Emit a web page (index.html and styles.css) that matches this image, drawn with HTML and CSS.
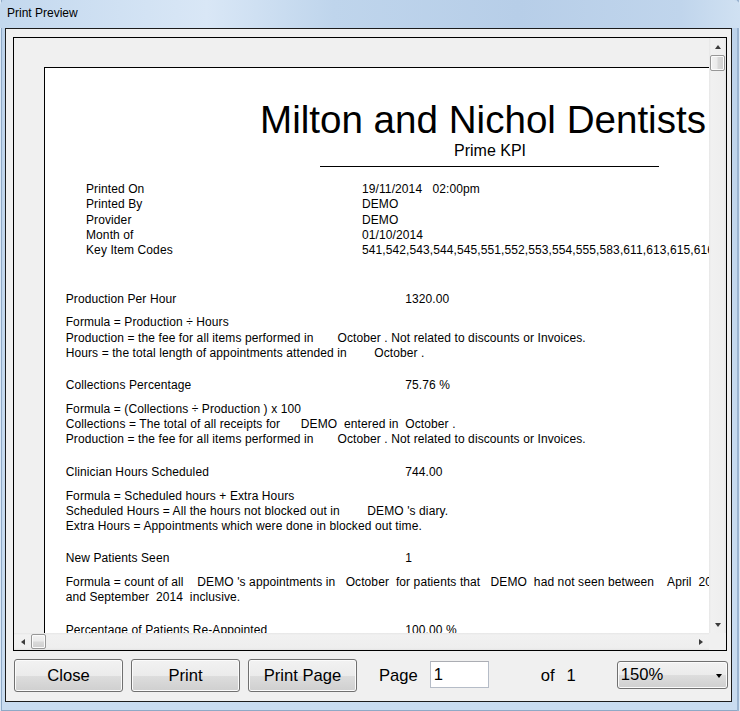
FILE: index.html
```html
<!DOCTYPE html>
<html>
<head>
<meta charset="utf-8">
<title>Print Preview</title>
<link rel="stylesheet" href="styles.css">
</head>
<body>
<div class="window">
  <div class="titlebar"><span class="title">Print Preview</span></div>
  <div class="frame">
    <div class="client">
      <div class="preview">
        <div class="viewport">
          <div class="page">
            <div class="rpt-title">Milton and Nichol Dentists</div>
            <div class="rpt-sub">Prime KPI</div>
            <div class="rpt-rule"></div>
            <div class="info">
              <span>Printed On</span><span class="val">19/11/2014   02:00pm</span>
              <span>Printed By</span><span class="val">DEMO</span>
              <span>Provider</span><span class="val">DEMO</span>
              <span>Month of</span><span class="val">01/10/2014</span>
              <span>Key Item Codes</span><span class="val">541,542,543,544,545,551,552,553,554,555,583,611,613,615,616,617,618</span>
            </div>
            <div class="sections">
              <div class="section">
                <div class="kpi"><span>Production Per Hour</span><span>1320.00</span></div>
                <div class="formula">
                  <div class="line">Formula = Production ÷ Hours</div>
                  <div class="line">Production = the fee for all items performed in       October . Not related to discounts or Invoices.</div>
                  <div class="line">Hours = the total length of appointments attended in        October .</div>
                </div>
              </div>
              <div class="section">
                <div class="kpi"><span>Collections Percentage</span><span>75.76 %</span></div>
                <div class="formula">
                  <div class="line">Formula = (Collections ÷ Production ) x 100</div>
                  <div class="line">Collections = The total of all receipts for      DEMO  entered in  October .</div>
                  <div class="line">Production = the fee for all items performed in       October . Not related to discounts or Invoices.</div>
                </div>
              </div>
              <div class="section">
                <div class="kpi"><span>Clinician Hours Scheduled</span><span>744.00</span></div>
                <div class="formula">
                  <div class="line">Formula = Scheduled hours + Extra Hours</div>
                  <div class="line">Scheduled Hours = All the hours not blocked out in        DEMO 's diary.</div>
                  <div class="line">Extra Hours = Appointments which were done in blocked out time.</div>
                </div>
              </div>
              <div class="section">
                <div class="kpi"><span>New Patients Seen</span><span>1</span></div>
                <div class="formula">
                  <div class="line">Formula = count of all    DEMO 's appointments in   October  for patients that   DEMO  had not seen between    April  2014</div>
                  <div class="line">and September  2014  inclusive.</div>
                </div>
              </div>
              <div class="section">
                <div class="kpi"><span>Percentage of Patients Re-Appointed</span><span>100.00 %</span></div>
                <div class="formula">
                  <div class="line">Formula = count of patients re-appointed</div>
                </div>
              </div>
            </div>
          </div>
        </div>
        <div class="vscroll">
          <div class="sb-btn"><span class="arr arr-up"></span></div>
          <div class="thumb thumb-v"></div>
          <div class="sb-fill"></div>
          <div class="sb-btn"><span class="arr arr-down"></span></div>
        </div>
        <div class="hscroll">
          <div class="sb-btn"><span class="arr arr-left"></span></div>
          <div class="thumb thumb-h"></div>
          <div class="sb-fill"></div>
          <div class="sb-btn"><span class="arr arr-right"></span></div>
        </div>
        <div class="corner"></div>
      </div>
      <div class="toolbar">
        <div class="btn">Close</div>
        <div class="btn">Print</div>
        <div class="btn">Print Page</div>
        <span class="lbl lbl-page">Page</span>
        <div class="pagebox">1</div>
        <span class="lbl lbl-of">of</span>
        <span class="lbl lbl-count">1</span>
        <div class="combo"><span>150%</span><span class="arr arr-down combo-arr"></span></div>
      </div>
    </div>
  </div>
</div>
</body>
</html>
```

FILE: styles.css
```css
html, body {
  margin: 0;
  padding: 0;
}
body {
  width: 740px;
  height: 711px;
  overflow: hidden;
  font-family: "Liberation Sans", Arial, sans-serif;
  color: #000;
}
.window {
  width: 740px;
  height: 711px;
  display: flex;
  flex-direction: column;
  background: linear-gradient(to bottom, #bcd2ea 0%, #c6daef 60%, #c9dcf0 100%);
  box-shadow: inset 1px 0 0 #dbe8f6, inset 2px 0 0 #8fa9c6, inset -1px 0 0 #dbe8f6, inset -3px 0 0 #9bb4d0, inset 0 -1px 0 #8fa9c6;
}
.titlebar {
  height: 28px;
  flex: none;
  padding-left: 7px;
  box-sizing: border-box;
  background: linear-gradient(to right, #c3d8ee 0%, #d3e3f4 20%, #d9e7f6 28%, #bfd5ec 45%, #b7cee8 70%, #c0d5ec 92%, #d0e1f2 100%);
  border-top-right-radius: 6px;
  border-top-left-radius: 6px;
}
.title {
  display: block;
  padding-top: 6px;
  font-size: 12px;
  line-height: 15px;
  color: #000;
}
.frame {
  flex: 1;
  padding: 0 8px 9px 5px;
  min-height: 0;
}
.client {
  height: 100%;
  box-sizing: border-box;
  border: 1px solid #1c1c1c;
  background: #f0f0f0;
  padding: 8px 0 0 7px;
}
.preview {
  width: 714px;
  height: 614px;
  box-sizing: border-box;
  border: 1px solid #000;
  display: grid;
  grid-template-columns: 695px 17px;
  grid-template-rows: 595px 17px;
}
.viewport {
  overflow: hidden;
  background: #f0f0f0;
}
.page {
  margin: 29px 0 0 30px;
  width: 900px;
  height: 800px;
  background: #fff;
  border: 1px solid #000;
  font-size: 12px;
  letter-spacing: 0.1px;
}
.rpt-title {
  margin: 33.1px 0 0 215px;
  font-size: 38.6px;
  line-height: 38.6px;
  letter-spacing: 0;
  white-space: nowrap;
}
.rpt-sub {
  margin: 2.3px 0 0 409px;
  font-size: 16px;
  line-height: 18px;
  letter-spacing: 0;
  white-space: nowrap;
}
.rpt-rule {
  margin: 5.8px 0 0 275px;
  width: 339px;
  height: 1px;
  background: #000;
}
.info {
  margin: 15.5px 0 0 41px;
  display: grid;
  grid-template-columns: 276px auto;
  line-height: 15.2px;
  white-space: nowrap;
}
.val {
  white-space: pre;
}
.sections {
  margin: 33.4px 0 0 20.7px;
}
.section + .section {
  margin-top: 17.2px;
}
.kpi {
  display: grid;
  grid-template-columns: 339.5px auto;
  line-height: 15.2px;
  white-space: nowrap;
}
.formula {
  margin-top: 8.6px;
  line-height: 15.2px;
}
.line {
  white-space: pre;
}

/* scrollbars */
.vscroll {
  grid-column: 2;
  grid-row: 1;
  display: flex;
  flex-direction: column;
  background: linear-gradient(to right, #e6e6e6 0%, #f1f1f1 12%, #eeeeee 88%, #e4e4e4 100%);
}
.hscroll {
  grid-column: 1;
  grid-row: 2;
  display: flex;
  flex-direction: row;
  background: linear-gradient(to bottom, #e6e6e6 0%, #f1f1f1 12%, #eeeeee 88%, #e4e4e4 100%);
}
.corner {
  grid-column: 2;
  grid-row: 2;
  background: #f0f0f0;
}
.sb-btn {
  width: 17px;
  height: 17px;
  flex: none;
  display: flex;
  align-items: center;
  justify-content: center;
}
.sb-fill {
  flex: 1;
}
.thumb {
  flex: none;
  box-sizing: border-box;
  border: 1px solid #979797;
  border-radius: 2px;
  box-shadow: inset 0 0 0 1px #fbfbfb;
}
.thumb-v {
  width: 15px;
  height: 16px;
  margin-left: 1px;
  background: linear-gradient(to right, #f2f2f2 0%, #ebebeb 45%, #d9d9d9 55%, #cfcfcf 100%);
}
.thumb-h {
  width: 15px;
  height: 15px;
  margin-top: 1px;
  background: linear-gradient(to bottom, #f2f2f2 0%, #ebebeb 45%, #d9d9d9 55%, #cfcfcf 100%);
}
.arr {
  width: 0;
  height: 0;
  display: block;
}
.arr-up {
  border-left: 3.5px solid transparent;
  border-right: 3.5px solid transparent;
  border-bottom: 4px solid #3b3b3b;
}
.arr-down {
  border-left: 3.5px solid transparent;
  border-right: 3.5px solid transparent;
  border-top: 4px solid #3b3b3b;
}
.arr-left {
  border-top: 3.5px solid transparent;
  border-bottom: 3.5px solid transparent;
  border-right: 4px solid #3b3b3b;
}
.arr-right {
  border-top: 3.5px solid transparent;
  border-bottom: 3.5px solid transparent;
  border-left: 4px solid #3b3b3b;
}

/* toolbar */
.toolbar {
  display: flex;
  align-items: flex-start;
  margin: 8px 0 0 1px;
  font-size: 16.6px;
}
.btn {
  width: 109px;
  height: 33px;
  box-sizing: border-box;
  margin-right: 8px;
  border: 1px solid #707070;
  border-radius: 3px;
  background: linear-gradient(to bottom, #f2f2f2 0%, #ebebeb 50%, #dddddd 51%, #cfcfcf 100%);
  box-shadow: inset 0 0 0 1px #fbfbfb;
  text-align: center;
  line-height: 32px;
  white-space: nowrap;
}
.lbl {
  line-height: 33px;
  white-space: nowrap;
}
.lbl-page {
  margin-left: 14px;
}
.pagebox {
  margin: 2px 0 0 12px;
  width: 59px;
  height: 27px;
  box-sizing: border-box;
  border: 1px solid #b5bcc7;
  border-top-color: #abadb3;
  background: #fff;
  padding-left: 3px;
  line-height: 25px;
}
.lbl-of {
  margin-left: 52px;
}
.lbl-count {
  margin-left: 12px;
}
.combo {
  margin: 2px 0 0 41px;
  width: 111px;
  height: 28px;
  box-sizing: border-box;
  border: 1px solid #707070;
  border-radius: 3px;
  background: linear-gradient(to bottom, #f2f2f2 0%, #ebebeb 50%, #dddddd 51%, #cfcfcf 100%);
  box-shadow: inset 0 0 0 1px #fbfbfb;
  padding: 0 5px 0 3px;
  display: flex;
  align-items: center;
  justify-content: space-between;
  line-height: 26px;
}
.combo-arr {
  margin-top: 1px;
  border-top-color: #000;
}
```
